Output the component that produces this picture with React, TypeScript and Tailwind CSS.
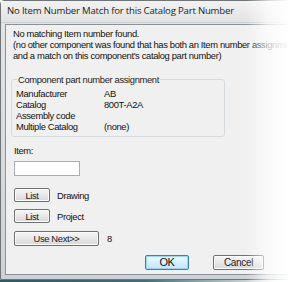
import React from "react";

const btn =
  "flex items-center justify-center rounded-[2px] border border-[#707070] bg-gradient-to-b from-[#f6f6f6] via-[#e8e8e8] to-[#d6d6d6] text-[#1a1a1a] shadow-[inset_0_0_0_1px_#fcfcfc]";

export default function App() {
  return (
    <div
      className="relative w-[290px] h-[282px] overflow-hidden bg-white text-[#111]"
      style={{ fontFamily: '"Liberation Sans", Arial, sans-serif' }}
    >
      {/* window */}
      <div className="w-[310px] h-[280px] flex flex-col rounded-t-[4px] border border-[#6f7477] bg-gradient-to-b from-[#e4e6e8] via-[#d9dde0] to-[#cdd2d6]">
        {/* title bar */}
        <div
          className="h-[22px] shrink-0 flex items-center pl-[6px] text-[9.6px] tracking-[-0.2px] text-[#1e1e1e] bg-gradient-to-b from-[#f2f2f2] to-[#e2e2e2] border-b border-[#c9cdd0]"
          style={{ fontFamily: '"Open Sans", "Noto Sans", sans-serif' }}
        >
          No Item Number Match for this Catalog Part Number
        </div>
        {/* client */}
        <div className="ml-[4px] mb-[4px] mt-[1px] flex-1 border border-[#8d9296] bg-[#f0f0f0] text-[9.4px] leading-[11px] tracking-[-0.35px] pl-[7px] pt-[3px]">
          <div>No matching Item number found.</div>
          <div>(no other component was found that has both an Item number assignment</div>
          <div>and a match on this component&apos;s catalog part number)</div>

          {/* group box */}
          <div className="relative mt-[18px] ml-[-2px] w-[214px] h-[58px] rounded-[3px] border border-[#d5dadf] pt-[8px] pl-[4px]">
            <div className="absolute left-[5px] top-[-6px] bg-[#f0f0f0] px-[1px] text-[#222]">
              Component part number assignment
            </div>
            <div className="grid grid-cols-[88px_1fr]">
              <div>Manufacturer</div>
              <div>AB</div>
              <div>Catalog</div>
              <div>800T-A2A</div>
              <div>Assembly code</div>
              <div></div>
              <div>Multiple Catalog</div>
              <div>(none)</div>
            </div>
          </div>

          <div className="mt-[8px] ml-[1px]">Item:</div>
          <div className="mt-[5px] ml-[1px] w-[66px] h-[15px] border border-[#abadb3] bg-white" />

          <div className="mt-[12px] ml-[1px] flex items-center gap-[7px]">
            <div className={`${btn} w-[36px] h-[14px]`}>List</div>
            <div>Drawing</div>
          </div>
          <div className="mt-[7px] ml-[1px] flex items-center gap-[7px]">
            <div className={`${btn} w-[36px] h-[14px]`}>List</div>
            <div>Project</div>
          </div>
          <div className="mt-[8px] ml-[1px] flex items-center gap-[8px]">
            <div className={`${btn} w-[85px] h-[15px]`}>Use Next&gt;&gt;</div>
            <div>8</div>
          </div>
          <div className="mt-[9px] flex gap-[24px] pl-[132px]">
            <div className="flex items-center justify-center w-[44px] h-[15px] rounded-[2px] border border-[#3c7fb1] bg-gradient-to-b from-[#eaf6fd] via-[#d9f0fc] to-[#bee6fd] shadow-[inset_0_0_0_1px_#9fd3f5] text-[11px]">
              OK
            </div>
            <div className={`${btn} w-[51px] h-[15px] text-[10px]`}>Cancel</div>
          </div>
        </div>
      </div>
      {/* bottom shadow line */}
      <div className="h-[2px] w-full bg-gradient-to-r from-[#2d5a64] via-[#3f6f78] to-transparent" />

      {/* right feather fade */}
      <div className="pointer-events-none absolute right-0 top-0 h-full w-[44px] bg-gradient-to-r from-transparent via-white/70 to-white" />
    </div>
  );
}
